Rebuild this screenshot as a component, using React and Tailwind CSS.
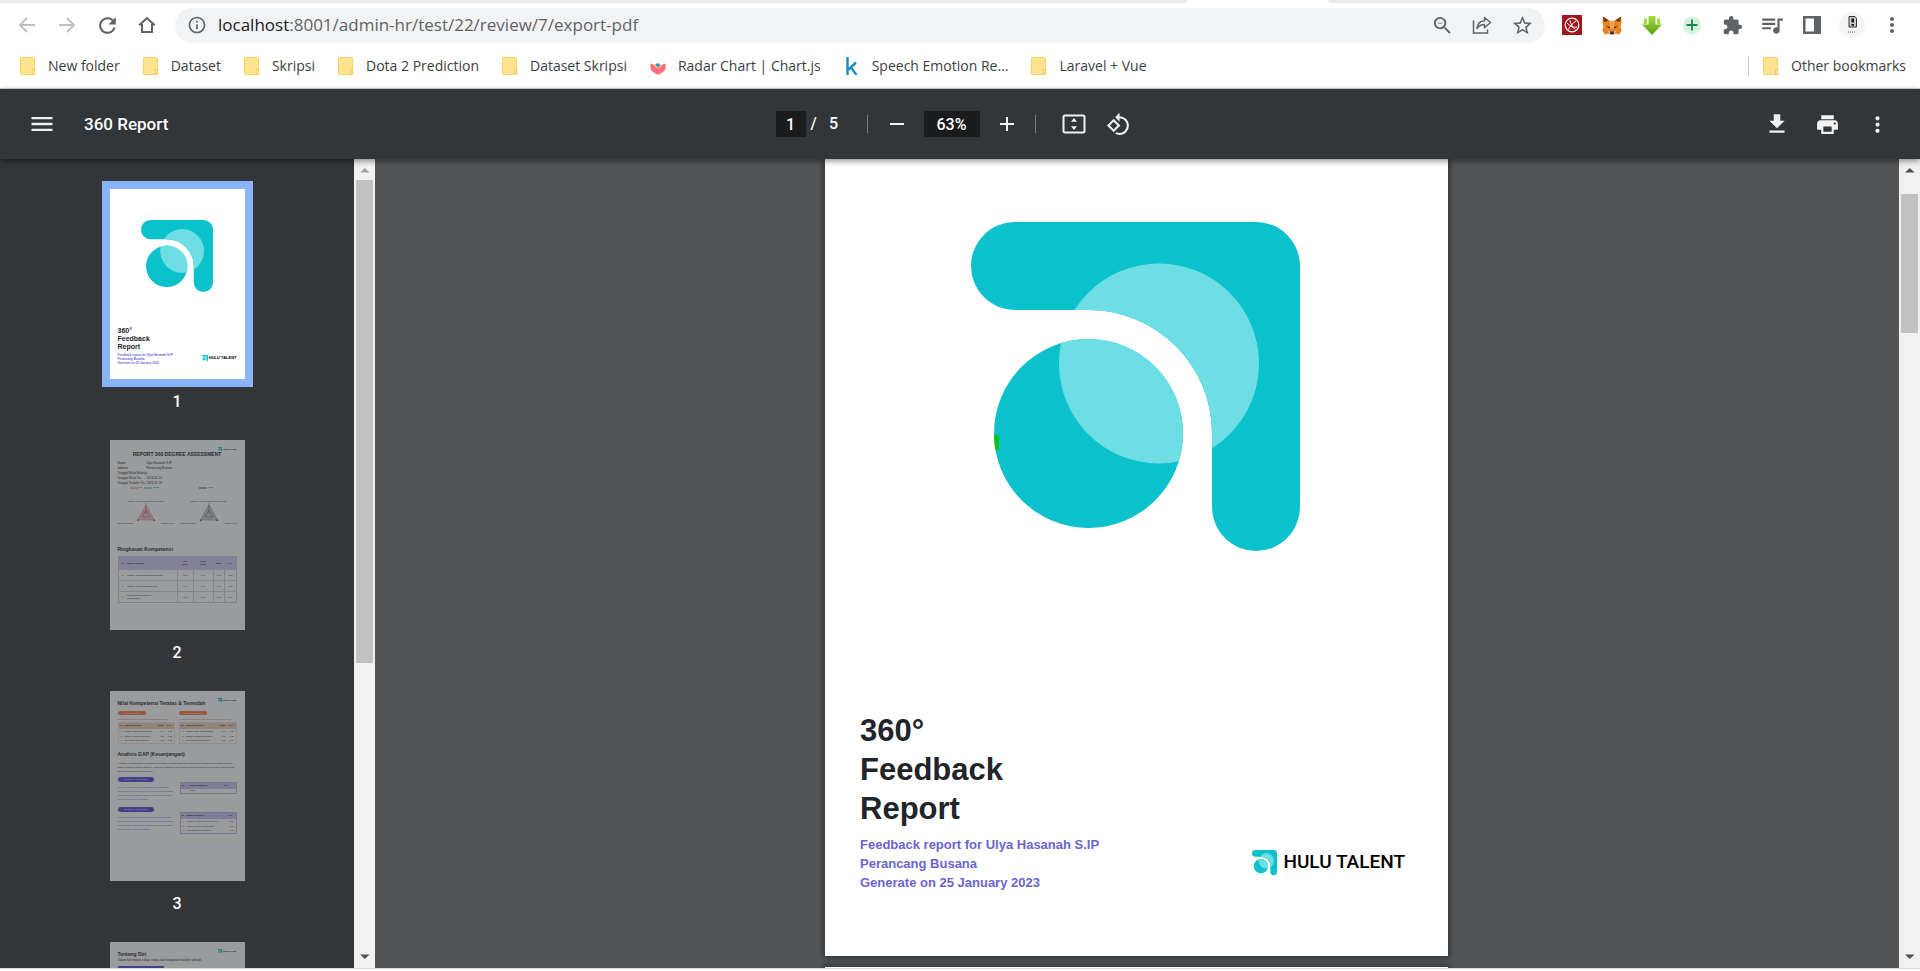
import React from "react";
import {
  MdRefresh,
  MdInfoOutline,
  MdZoomOut,
  MdStarBorder,
  MdExtension,
  MdQueueMusic,
  MdMoreVert,
  MdMenu,
  MdAdd,
  MdRemove,
  MdRotate90DegreesCcw,
  MdDownload,
  MdPrint,
} from "react-icons/md";

/* ---------- Browser icons ---------- */

const BackIcon = () => (
  <svg width="18" height="18" viewBox="0 0 18 18" fill="none" stroke="#bdbec0" strokeWidth="1.8">
    <path d="M17 9H2.500M9 2L2 9l7 7" />
  </svg>
);

const ForwardIcon = () => (
  <svg width="18" height="18" viewBox="0 0 18 18" fill="none" stroke="#bdbec0" strokeWidth="1.8">
    <path d="M1 9h14.500M9 2l7 7-7 7" />
  </svg>
);

const HomeIcon = () => (
  <svg width="18" height="18" viewBox="0 0 18 18" fill="none" stroke="#5f6368" strokeWidth="2">
    <path d="M1.200 9.200L9 2l7.800 7.200M4 8v8h10V8" />
  </svg>
);

const ShareIcon = () => (
  <svg width="20" height="20" viewBox="0 0 20 20" fill="none" stroke="#5f6368" strokeWidth="1.500">
    <path d="M1.500 5.500V18h14v-3.500" />
    <path d="M5 13.500c.5-5 3-7.500 7.500-7.800V2.500l6 5-6 5.200V9.500c-3.500 0-5.500 1.200-7.500 4z" strokeLinejoin="round" />
  </svg>
);

const AcrobatIcon = () => (
  <svg width="20" height="20" viewBox="0 0 20 20">
    <path fill="#a3171c" d="M0 0h20v20H0z" />
    <circle cx="10" cy="10" r="6.800" fill="none" stroke="#fff" strokeWidth="1.200" />
    <path d="M5 8c3 3 7 5 10 4M6.500 14.500C8 11 11 8 14 6M8 5.500c1 4 3 7 5 9" fill="none" stroke="#fff" strokeWidth="1" />
  </svg>
);

const FoxIcon = () => (
  <svg width="20" height="19" viewBox="0 0 20 19">
    <path fill="#e8821e" d="M.8.500L8 5h4L19.200.500l.3 5.500-1 4.500 1.200 4L17 18.500l-3.500-1L12 19H8l-1.500-1.500-3.500 1-2.700-4 1.200-4L.5 6z" />
    <path fill="#763e1a" d="M.8.500L7 4.500 2 6zM19.200.500L13 4.500l5 1.500z" />
    <path fill="#f6a04a" d="M7.500 5h5l-.5 8h-4z" />
    <path fill="#d5bfb2" d="M5.500 14.500l2.500 4h4l2.500-4-2.500 1h-4z" />
    <path fill="#2b2320" d="M8 15.500h4l-.5 2.500h-3zM4.500 10l3.500 1-.8 1.500zM15.500 10L12 11l.8 1.500z" />
  </svg>
);

const GreenArrowIcon = () => (
  <svg width="20" height="20" viewBox="0 0 20 20">
    <defs>
      <linearGradient id="arrow-green" x1="0" y1="0" x2="0" y2="1">
        <stop offset="0" stopColor="#a5dc3c" />
        <stop offset="1" stopColor="#5aa012" />
      </linearGradient>
    </defs>
    <path fill="url(#arrow-green)" d="M6.500 1h7v8.500H20L10 20 0 9.500h6.500z" />
    <path fill="#a5dc3c" d="M2 3.500h3V9H0l2-1zM18 3.500h-3V9h5l-2-1z" />
  </svg>
);

const PlusBadgeIcon = () => (
  <svg width="20" height="20" viewBox="0 0 20 20">
    <circle cx="10" cy="10.500" r="9" fill="#d5f2dc" />
    <path d="M10 4.500v11M4.500 10h11" stroke="#0f8a55" strokeWidth="1.800" />
  </svg>
);

const SidePanelIcon = () => (
  <svg width="18" height="18" viewBox="0 0 18 18">
    <path fill="#5f6368" fillRule="evenodd" d="M0 0h18v18H0zM2.500 2.500v13H11v-13z" />
  </svg>
);

const AvatarIcon = () => (
  <svg width="26" height="26" viewBox="0 0 26 26">
    <circle cx="13" cy="13" r="13" fill="#f5f5f5" />
    <path d="M10 4.500h6l1.500 2V15H10z" fill="#c9c9c9" stroke="#333" strokeWidth="1" />
    <path d="M12.500 6.500h2.500v4h-2.500zM12.500 12h2.500v1.800h-2.500z" fill="#111" />
    <path d="M9.500 19v2M11.500 19v2M13.500 19v2M15.500 19v2" stroke="#a8a8a8" strokeWidth="1" />
  </svg>
);

const FolderIcon = () => (
  <svg width="16" height="18" viewBox="0 0 16 18">
    <path d="M1 .5h12.500a1 1 0 0 1 1 1V17.500H1a.5.5 0 0 1-.5-.5V1A.5.5 0 0 1 1 .5z" fill="#ffe38e" stroke="#f3d26a" />
    <path d="M12.500 12.500h2.500v4.500h-2.500z" fill="#ffe793" stroke="#eac651" strokeWidth=".8" />
  </svg>
);

const ChartJsIcon = () => (
  <svg width="16" height="18" viewBox="0 0 16 18">
    <path d="M8 .5l7.500 4.300v8.400L8 17.500.500 13.200V4.800z" fill="#fff" stroke="#ececec" strokeWidth=".6" />
    <path d="M.5 7C3 6 4.500 9.500 8 9.500S13 6 15.500 7v4.500c0 2-5 5.500-7.500 6-2.500-.5-7.500-4-7.500-6z" fill="#ff6c82" />
    <path d="M4 9c2-3 3.500-3 5-1.500l3 1.500-4 3z" fill="#f9c34c" />
    <path d="M5.500 7.500L8 6l2.500 2L8 10.500z" fill="#2f93dd" />
  </svg>
);

const KaggleIcon = () => (
  <svg width="12" height="18" viewBox="0 0 12 18" fill="none" stroke="#178fbd" strokeWidth="2.400">
    <path d="M1.500 0v18M10 5.500L2.500 12.500M5 10.500l5.500 7.500" />
  </svg>
);

const FitPageIcon = () => (
  <svg width="24" height="20" viewBox="0 0 24 20">
    <rect x="1.500" y="1.500" width="21" height="17" rx="1.500" fill="none" stroke="#f1f1f1" strokeWidth="2" />
    <path fill="#f1f1f1" d="M12 4l3 3.800H9zM12 16l3-3.800H9z" />
  </svg>
);

/* ---------- Brand ---------- */

function Mark({ id, className, artifact = false }) {
  return (
    <svg viewBox="0 0 329 329" className={className} aria-hidden="true">
      <defs>
        <clipPath id={id}>
          <path d="M44 0H285a44 44 0 0 1 44 44V285a44 44 0 0 1-88 0V211.500A123.500 123.500 0 0 0 117.500 88H44a44 44 0 0 1 0-88z" />
          <circle cx="117.500" cy="211.500" r="94.500" />
        </clipPath>
      </defs>
      <g clipPath={`url(#${id})`}>
        <rect width="329" height="329" fill="#0bc1cc" />
        <circle cx="188" cy="141.500" r="100" fill="#6ddfe4" />
        {artifact && <rect x="22" y="213" width="6" height="15" fill="#08c414" />}
      </g>
    </svg>
  );
}

function TinyBrand({ id }) {
  return (
    <div className="flex shrink-0 items-center justify-end gap-px whitespace-nowrap text-[2px] font-bold leading-[4px] text-black">
      <Mark id={id} className="size-[4px]" />
      HULU TALENT
    </div>
  );
}

/* ---------- Browser chrome ---------- */

function ChromeButton({ label, children }) {
  return (
    <button type="button" aria-label={label} className="flex h-9 w-10 shrink-0 items-center justify-center text-[#5f6368]">
      {children}
    </button>
  );
}

function Bookmark({ icon, children }) {
  return (
    <a href="#" className="flex shrink-0 items-center gap-3 whitespace-nowrap">
      <span className="flex w-4 justify-center">{icon}</span>
      {children}
    </a>
  );
}

function BrowserChrome() {
  return (
    <header className="shrink-0 bg-white font-['Open_Sans','Noto_Sans',sans-serif]">
      <div className="flex h-[3px]">
        <div className="flex-[1187] rounded-br bg-[#e8eaed]" />
        <div className="flex-[141]" />
        <div className="flex-[592] rounded-bl bg-[#e8eaed]" />
      </div>
      <div className="flex items-center pl-[7px] pr-2 pt-1">
        <ChromeButton label="Back"><BackIcon /></ChromeButton>
        <ChromeButton label="Forward"><ForwardIcon /></ChromeButton>
        <ChromeButton label="Reload"><MdRefresh size={25} /></ChromeButton>
        <ChromeButton label="Home"><HomeIcon /></ChromeButton>
        <div className="ml-2 mr-[7px] flex h-[35px] min-w-0 flex-1 items-center rounded-full bg-[#f1f3f4] pl-3 pr-[3px]">
          <MdInfoOutline size={20} className="shrink-0 text-[#5f6368]" />
          <div className="ml-[11px] min-w-0 flex-1 truncate text-[17px] leading-6 text-[#5f6368]">
            <span className="text-[#202124]">localhost</span>:8001/admin-hr/test/22/review/7/export-pdf
          </div>
          <ChromeButton label="Zoom out"><MdZoomOut size={23} /></ChromeButton>
          <ChromeButton label="Share"><ShareIcon /></ChromeButton>
          <ChromeButton label="Bookmark this page"><MdStarBorder size={23} /></ChromeButton>
        </div>
        <ChromeButton label="Acrobat"><AcrobatIcon /></ChromeButton>
        <ChromeButton label="Wallet"><FoxIcon /></ChromeButton>
        <ChromeButton label="Download manager"><GreenArrowIcon /></ChromeButton>
        <ChromeButton label="Add"><PlusBadgeIcon /></ChromeButton>
        <ChromeButton label="Extensions"><MdExtension size={21} /></ChromeButton>
        <ChromeButton label="Media"><MdQueueMusic size={26} /></ChromeButton>
        <ChromeButton label="Side panel"><SidePanelIcon /></ChromeButton>
        <ChromeButton label="Profile"><AvatarIcon /></ChromeButton>
        <ChromeButton label="Menu"><MdMoreVert size={24} /></ChromeButton>
      </div>
      <nav className="flex h-[46px] items-center gap-[23px] border-b border-[#d5d6d8] pl-5 pr-[14px] text-[14px] text-[#3c4043]">
        <Bookmark icon={<FolderIcon />}>New folder</Bookmark>
        <Bookmark icon={<FolderIcon />}>Dataset</Bookmark>
        <Bookmark icon={<FolderIcon />}>Skripsi</Bookmark>
        <Bookmark icon={<FolderIcon />}>Dota 2 Prediction</Bookmark>
        <Bookmark icon={<FolderIcon />}>Dataset Skripsi</Bookmark>
        <Bookmark icon={<ChartJsIcon />}>Radar Chart | Chart.js</Bookmark>
        <Bookmark icon={<KaggleIcon />}>Speech Emotion Re...</Bookmark>
        <Bookmark icon={<FolderIcon />}>Laravel + Vue</Bookmark>
        <div className="ml-auto flex items-center gap-[14px]">
          <span className="h-5 w-px bg-[#c9cbce]" />
          <Bookmark icon={<FolderIcon />}>Other bookmarks</Bookmark>
        </div>
      </nav>
    </header>
  );
}

/* ---------- Viewer toolbar ---------- */

function ToolButton({ label, children }) {
  return (
    <button type="button" aria-label={label} className="flex size-8 items-center justify-center text-[#f1f1f1]">
      {children}
    </button>
  );
}

function ViewerToolbar() {
  return (
    <div className="relative z-10 flex h-[70px] shrink-0 items-center bg-[#323639] font-[Roboto,sans-serif] text-[16px] font-medium text-white shadow-[0_2px_6px_rgba(0,0,0,0.45)]">
      <div className="flex flex-1 items-center gap-[26px] pl-[26px]">
        <ToolButton label="Menu"><MdMenu size={28} /></ToolButton>
        <h1 className="text-[17px] leading-6">360 Report</h1>
      </div>
      <div className="flex items-center pr-[9px]">
        <input aria-label="Page number" defaultValue="1" className="h-[26px] w-[30px] bg-[#191b1c] text-center" />
        <span className="w-4 text-center">/</span>
        <span className="w-6 text-center">5</span>
        <span className="ml-[21px] h-[18px] w-px bg-[#7b7d80]" />
        <span className="ml-[13px]"><ToolButton label="Zoom out"><MdRemove size={24} /></ToolButton></span>
        <input aria-label="Zoom level" defaultValue="63%" className="mx-[11px] h-[26px] w-[56px] bg-[#191b1c] text-center" />
        <ToolButton label="Zoom in"><MdAdd size={24} /></ToolButton>
        <span className="mx-3 h-[18px] w-px bg-[#7b7d80]" />
        <span className="ml-[10px]"><ToolButton label="Fit to page"><FitPageIcon /></ToolButton></span>
        <span className="ml-[13px]"><ToolButton label="Rotate counterclockwise"><MdRotate90DegreesCcw size={25} /></ToolButton></span>
      </div>
      <div className="flex flex-1 items-center justify-end gap-[18px] pr-[27px]">
        <ToolButton label="Download"><MdDownload size={26} /></ToolButton>
        <ToolButton label="Print"><MdPrint size={25} /></ToolButton>
        <ToolButton label="More actions"><MdMoreVert size={25} /></ToolButton>
      </div>
    </div>
  );
}

/* ---------- Scrollbar ---------- */

function Scrollbar({ thumb, topClass }) {
  return (
    <div className="flex w-[21px] shrink-0 flex-col items-center bg-[#f1f1f1]">
      <svg width="21" height="21" viewBox="0 0 21 21" className={topClass} fill="currentColor">
        <path d="M6 13.500h9.500L10.800 9z" />
      </svg>
      <div className={thumb} />
      <svg width="21" height="21" viewBox="0 0 21 21" className="mt-auto text-[#505050]" fill="currentColor">
        <path d="M6 7.500h9.500L10.800 12z" />
      </svg>
    </div>
  );
}

/* ---------- Thumbnails ---------- */

function CoverThumb() {
  return (
    <div className="flex h-full flex-col px-2 pt-[31px]">
      <Mark id="mark-thumb" className="ml-[23px] size-[72px]" />
      <div className="mt-[35px] text-[7px] font-bold leading-[8px] text-[#212529]">
        360°<br />Feedback<br />Report
      </div>
      <div className="mt-[2px] flex items-start justify-between">
        <div className="text-[3px] font-bold leading-[4px] text-[#6a64cf]">
          Feedback report for Ulya Hasanah S.IP<br />Perancang Busana<br />Generate on 25 January 2023
        </div>
        <div className="mt-[2px] flex items-center gap-px text-[4px] font-bold leading-[6px] text-black">
          <Mark id="mark-thumb-s" className="size-[6px]" />
          HULU TALENT
        </div>
      </div>
    </div>
  );
}

function MiniRadar({ fill, stroke, inner, labels }) {
  return (
    <div className="flex w-[56px] flex-col text-[2px] leading-[3px]">
      <span className="text-center">{labels[0]}</span>
      <svg viewBox="0 0 20 18" className="mx-auto h-[18px] w-5">
        <path d="M10 2L18.500 17H1.500z" fill={fill} stroke={stroke} strokeWidth=".5" />
        <path d="M10 0v11M10 7l4 7H6z" fill="none" stroke={inner} strokeWidth=".5" />
        <path d="M1 16.500h1.500v1.500H1zM17.500 16.500H19v1.500h-1.500z" fill={inner} />
      </svg>
      <div className="mt-px flex justify-between">
        <span>{labels[1]}</span>
        <span>{labels[2]}</span>
      </div>
    </div>
  );
}

const infoRows = [
  ["Nama", "Ulya Hasanah S.IP"],
  ["Jabatan", "Perancang Busana"],
  ["Tanggal Mulai Bekerja", "-"],
  ["Tanggal Mulai Tes", "2023-01-14"],
  ["Tanggal Terakhir Tes", "2023-01-18"],
];

const summaryRows = [
  ["1", "Category Tidak Mengharuskan Ujaranah", "3.15", "1.40", "-0.63", "-0.88"],
  ["2", "Category Pantulan abajudora nisu", "2.15", "1.38", "-0.15", "-0.78"],
  ["3", "Nana ipsum dolor sampling realisasinekah", "3.85", "1.50", "-0.58", "-0.80"],
];

function SummaryThumb() {
  return (
    <div className="px-2 pt-[7px] text-[3px] leading-[5px] text-[#212529]">
      <TinyBrand id="mark-p2" />
      <h3 className="text-center text-[5px] font-bold leading-[6px]">REPORT 360 DEGREE ASSESSMENT</h3>
      <dl className="mt-[4px] grid grid-cols-[29px_1fr] whitespace-nowrap">
        {infoRows.map(([k, v]) => (
          <React.Fragment key={k}>
            <dt>{k}</dt>
            <dd>{v}</dd>
          </React.Fragment>
        ))}
      </dl>
      <div className="flex h-[3px] items-center text-[2px] leading-[3px]">
        <span className="ml-3 mr-px h-[2px] w-[8px] bg-[#f3b4bf]" />Self
        <span className="ml-[2px] mr-px h-[2px] w-[8px] bg-[#9fcbea]" />Overall
        <span className="ml-[40px] mr-px h-[2px] w-[8px] bg-[#a8a8a8]" />Mean
      </div>
      <div className="mt-[11px] flex justify-between">
        <MiniRadar fill="#f3c3cb" stroke="#e77c8b" inner="#b8505f" labels={["Category Tidak Mengharuskan Ujaranah", "Nana ipsum dolor", "Category Pan"]} />
        <MiniRadar fill="#cfcfcf" stroke="#777" inner="#555" labels={["Category Tidak Mengharuskan Ujaranah", "Nana ipsum dolor", "Category Pan"]} />
      </div>
      <h3 className="mt-[21px] text-[5px] font-bold leading-[6px]">Ringkasan Kompetensi</h3>
      <table className="mt-1 w-full border-collapse border border-[#cbc5e6] text-center text-[2px] leading-[3px]">
        <thead>
          <tr className="h-[13px] bg-[#d3cafa]">
            <th className="w-[9px]">No</th>
            <th className="text-left">Nama Kompetensi</th>
            <th className="w-[16px]">Self<br />Score</th>
            <th className="w-[20px]">Overall<br />Score</th>
            <th className="w-[11px]">Mean</th>
            <th className="w-[12px]">GAP</th>
          </tr>
        </thead>
        <tbody>
          {summaryRows.map((r) => (
            <tr key={r[0]} className="h-[11px] border-t border-[#d8d4e8]">
              <td>{r[0]}</td>
              <td className="pr-3 text-left">{r[1]}</td>
              {r.slice(2).map((v, i) => (
                <td key={i} className="border-l border-[#d8d4e8]">{v}</td>
              ))}
            </tr>
          ))}
        </tbody>
      </table>
    </div>
  );
}

function MiniTable({ head, rows, headClass, frameClass }) {
  return (
    <table className={frameClass}>
      <thead>
        <tr className={headClass}>
          {head.map((h, i) => (
            <th key={h} className={i === 1 ? "text-left" : "px-px"}>{h}</th>
          ))}
        </tr>
      </thead>
      <tbody>
        {rows.map((r, n) => (
          <tr key={n} className="h-[5px]">
            {r.map((v, i) => (
              <td key={i} className={i === 1 ? "text-left" : "px-px text-center"}>{v}</td>
            ))}
          </tr>
        ))}
      </tbody>
    </table>
  );
}

const orangeFrame = "w-full whitespace-nowrap border-collapse border border-[#f3e2d8] text-[2px] leading-[3px]";
const purpleFrame = "w-full whitespace-nowrap border-collapse border border-[#bdb6e2] text-[2px] leading-[3px]";

function GapBlock({ title, head, rows, lines }) {
  return (
    <div className="grid grid-cols-[58px_57px] gap-x-[4px]">
      <div>
        <div className="h-[5px] w-9 rounded-full bg-[#554ddb] text-center text-[2px] leading-[5px] text-white">{title}</div>
        <p className="mt-[3px] text-[2px] leading-[4px] text-[#5a54c8]">{lines}</p>
      </div>
      <div className="pt-[5px]">
        <MiniTable frameClass={purpleFrame} headClass="h-[6px] bg-[#cbc3f5]" head={head} rows={rows} />
      </div>
    </div>
  );
}

function GapThumb() {
  return (
    <div className="px-2 pt-[7px] text-[3px] leading-[3px] text-[#212529]">
      <div className="flex items-start justify-between">
        <h3 className="whitespace-nowrap pt-[2px] text-[5px] font-bold leading-[6px]">Nilai Kompetensi Teratas &amp; Terendah</h3>
        <TinyBrand id="mark-p3" />
      </div>
      <div className="mt-[5px] grid grid-cols-2 gap-x-[4px]">
        {["Kompetensi Teratas", "Kompetensi Terendah"].map((t, k) => (
          <div key={t}>
            <div className="h-1 w-7 rounded-full bg-[#f57d3c] text-center text-[2px] leading-[4px] text-white">{t}</div>
            <p className="mb-px mt-[3px] whitespace-nowrap text-[2px] leading-[3px] text-[#a8624a]">
              {k === 0 ? "Kompetensi dengan nilai rata-rata tertinggi adalah berikut" : "Kompetensi dengan nilai rata-rata terendah adalah berikut"}
            </p>
            <MiniTable
              frameClass={orangeFrame}
              headClass="h-[6px] bg-[#f6cdb6]"
              head={["No", "Nama Kompetensi", "Mean", "GAP"]}
              rows={[
                ["1", "Category Tidak Mengharuskan", "-0.63", "-0.88"],
                ["2", "Category Pantulan abajudora", "-0.15", "-0.78"],
                ["3", "Nana ipsum dolor sampling", "-0.58", "-0.80"],
              ]}
            />
          </div>
        ))}
      </div>
      <h3 className="mt-[7px] text-[5px] font-bold leading-[6px]">Analisis GAP (Kesenjangan)</h3>
      <p className="mb-1 mt-[4px] text-[2px] leading-[4px]">
        Analisis GAP (analisis selisih) merupakan alat penilaian diri sendiri pada suatu kompetensi lain yang dinilai oleh orang lain seperti atasan, rekan kerja, maupun bawahan. Analisis GAP digunakan untuk melihat kesenjangan antara nilai diri sendiri dengan penilaian orang lain pada kompetensi yang sama.
      </p>
      <GapBlock
        title="Self Score > Overall Score"
        head={["No", "Nama Kompetensi", "GAP"]}
        rows={[["", "None", ""]]}
        lines="GAP bernilai positif ketika penilaian diri sendiri lebih tinggi dibandingkan penilaian orang lain. Hal ini menunjukkan bahwa peserta menilai kemampuan dirinya lebih baik daripada yang dilihat oleh orang lain di sekitarnya."
      />
      <div className="h-[6px]" />
      <GapBlock
        title="Self Score < Overall Score"
        head={["No", "Nama Kompetensi", "GAP"]}
        rows={[
          ["1", "Category Pantulan abajudora nisu", "-0.78"],
          ["2", "Category Tidak Mengharuskan", "-0.80"],
          ["3", "Nana ipsum dolor sampling", "-0.88"],
        ]}
        lines="GAP bernilai negatif ketika penilaian diri sendiri lebih rendah dibandingkan penilaian orang lain. Hal ini menunjukkan bahwa peserta memiliki kemampuan yang lebih baik daripada yang ia nilai sendiri dan perlu dikembangkan."
      />
    </div>
  );
}

function AboutThumb() {
  return (
    <div className="px-2 pt-[7px] text-[#212529]">
      <div className="flex items-start justify-between">
        <h3 className="pt-[2px] text-[5px] font-bold leading-[6px]">Tentang Diri</h3>
        <TinyBrand id="mark-p4" />
      </div>
      <p className="mt-px whitespace-nowrap text-[3px] leading-[4px]">Dalam hal tingkat, sikap, orang, dan ketepatan karakter pribadi</p>
      <div className="mt-1 h-[5px] w-[46px] bg-[#554ddb]" />
    </div>
  );
}

const thumbs = [CoverThumb, SummaryThumb, GapThumb, AboutThumb];

function Sidebar() {
  return (
    <aside className="flex w-[375px] shrink-0 bg-[#323639]">
      <ol className="flex flex-1 flex-col items-center overflow-hidden pt-[22px]">
        {thumbs.map((Thumb, i) => (
          <li key={i} className="flex h-[251px] shrink-0 flex-col items-center">
            <button
              type="button"
              aria-label={`Go to page ${i + 1}`}
              className={i === 0 ? "bg-[#8ab4f8] p-2 text-left" : "p-2 text-left opacity-50"}
            >
              <div className="h-[190px] w-[135px] overflow-hidden bg-white font-['Liberation_Sans',Arial,sans-serif]">
                <Thumb />
              </div>
            </button>
            <span className="font-[Roboto,sans-serif] text-[16px] font-medium leading-[30px] text-white">{i + 1}</span>
          </li>
        ))}
      </ol>
      <Scrollbar topClass="text-[#a3a3a3]" thumb="h-[483px] w-[17px] bg-[#c1c1c1]" />
    </aside>
  );
}

/* ---------- Document ---------- */

function Document() {
  return (
    <main className="flex min-w-0 flex-1 bg-[#525659]">
      <div className="flex flex-1 flex-col items-center overflow-hidden pr-px font-['Liberation_Sans',Arial,sans-serif]">
        <article className="flex w-[623px] shrink-0 flex-col bg-white px-[35px] pb-[64px] pt-[63px] shadow-[0_0_6px_2px_rgba(0,0,0,0.4)]">
          <Mark id="mark-cover" artifact className="ml-[111px] size-[329px]" />
          <h2 className="mt-[160px] text-[31px] font-bold leading-[39px] text-[#212529]">
            360°<br />Feedback<br />Report
          </h2>
          <div className="mt-[7px] flex items-center justify-between">
            <p className="text-[13px] font-bold leading-[19px] text-[#6a64cf]">
              Feedback report for Ulya Hasanah S.IP<br />Perancang Busana<br />Generate on 25 January 2023
            </p>
            <div className="mr-2 flex items-center gap-[6px] pb-[3px] font-[Roboto,sans-serif] text-[19px] font-medium leading-6 text-black">
              <Mark id="mark-footer" className="size-[25px]" />
              HULU TALENT
            </div>
          </div>
        </article>
        <div className="mt-[11px] h-10 w-[623px] shrink-0 bg-white shadow-[0_0_6px_2px_rgba(0,0,0,0.4)]" />
      </div>
      <Scrollbar topClass="mb-[14px] text-[#505050]" thumb="h-[139px] w-[17px] bg-[#c1c1c1]" />
    </main>
  );
}

export default function App() {
  return (
    <div className="flex h-screen flex-col overflow-hidden bg-white">
      <BrowserChrome />
      <ViewerToolbar />
      <div className="flex min-h-0 flex-1">
        <Sidebar />
        <Document />
      </div>
      <div className="h-[3px] shrink-0 border-t border-[#d9d9d9] bg-white" />
    </div>
  );
}
